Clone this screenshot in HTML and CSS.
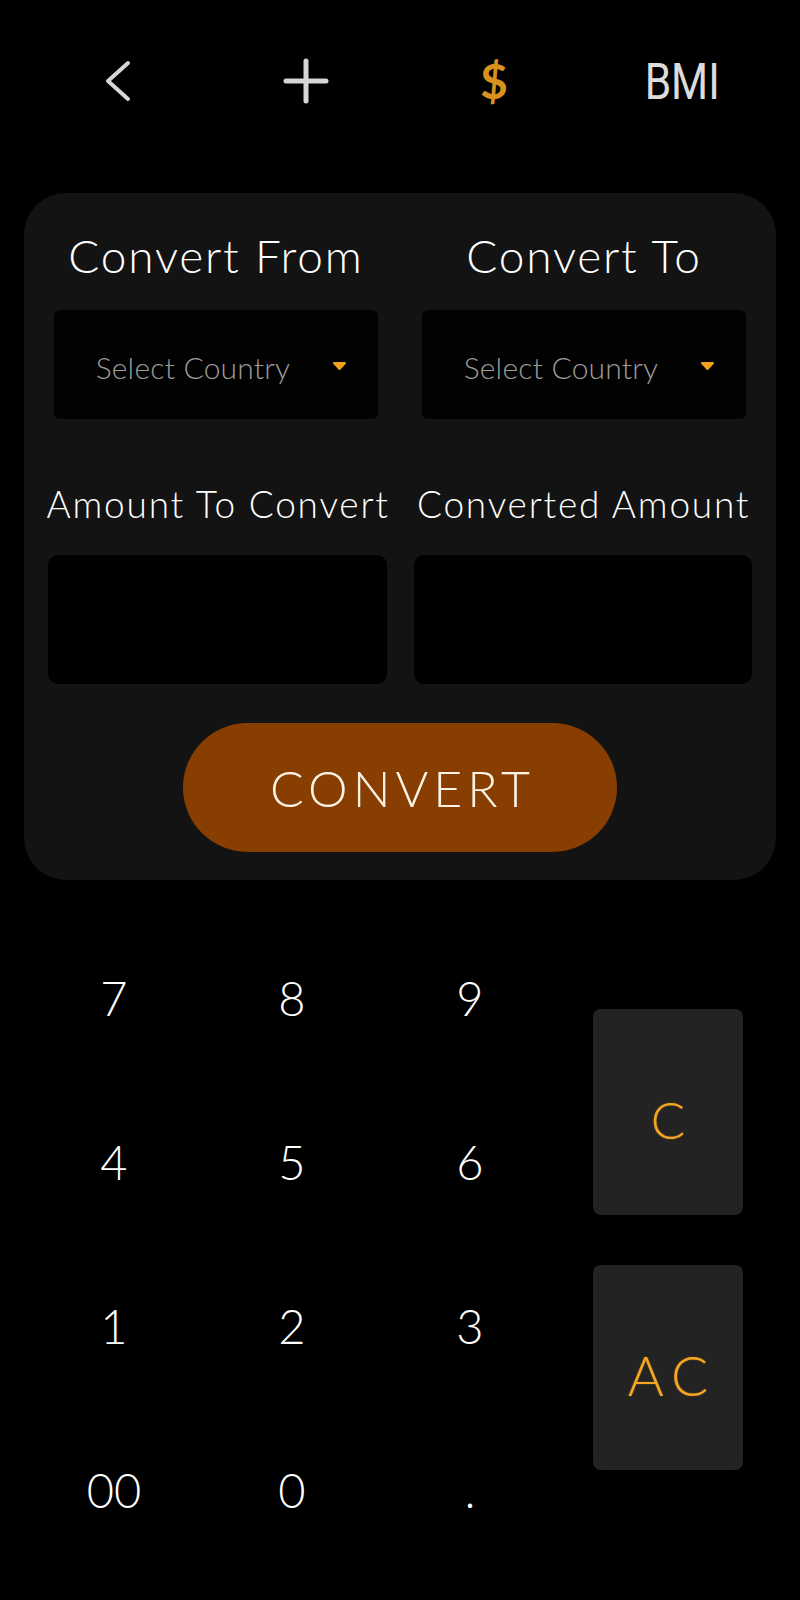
FILE: index.html
```html
<!DOCTYPE html>
<html lang="en">
<head>
<meta charset="utf-8">
<title>Currency Converter</title>
<link rel="stylesheet" href="styles.css">
</head>
<body>
<div class="app">
  <header class="topbar">
    <div class="tab">
      <svg class="ico" width="28" height="44" viewBox="0 0 28 44"><path d="M24 4 L4 22 L24 40" fill="none" stroke="#d6d6d6" stroke-width="4" stroke-linecap="round" stroke-linejoin="round"/></svg>
    </div>
    <div class="tab">
      <svg class="ico" width="46" height="46" viewBox="0 0 46 46"><path d="M23 3 V43 M3 23 H43" fill="none" stroke="#d6d6d6" stroke-width="5" stroke-linecap="round"/></svg>
    </div>
    <div class="tab dollar">$</div>
    <div class="tab bmi"><span>BMI</span></div>
  </header>

  <section class="card">
    <div class="pair pair-titles">
      <h2 class="title">Convert From</h2>
      <h2 class="title">Convert To</h2>
    </div>
    <div class="pair pair-selects">
      <div class="select">
        <span class="select-text">Select Country</span>
        <svg class="caret" width="15" height="10" viewBox="0 0 15 10"><path d="M2 2 H13 L7.5 8 Z" fill="#f5a21f" stroke="#f5a21f" stroke-width="2" stroke-linejoin="round"/></svg>
      </div>
      <div class="select">
        <span class="select-text">Select Country</span>
        <svg class="caret" width="15" height="10" viewBox="0 0 15 10"><path d="M2 2 H13 L7.5 8 Z" fill="#f5a21f" stroke="#f5a21f" stroke-width="2" stroke-linejoin="round"/></svg>
      </div>
    </div>
    <div class="pair pair-labels">
      <div class="label"><span>Amount To Convert</span></div>
      <div class="label"><span>Converted Amount</span></div>
    </div>
    <div class="pair pair-inputs">
      <div class="field"></div>
      <div class="field"></div>
    </div>
    <div class="convert">CONVERT</div>
  </section>

  <section class="keypad">
    <div class="digits">
      <span>7</span><span>8</span><span>9</span>
      <span>4</span><span>5</span><span>6</span>
      <span>1</span><span>2</span><span>3</span>
      <span>00</span><span>0</span><span>.</span>
    </div>
    <div class="ops">
      <div class="op">C</div>
      <div class="op op-ac">AC</div>
    </div>
  </section>
</div>
</body>
</html>
```

FILE: styles.css
```css
* { box-sizing: border-box; }

body {
  margin: 0;
  background: #000;
  font-family: Lato, "Open Sans", "Noto Sans", sans-serif;
  font-weight: 300;
  color: #fff;
}

.app { width: 800px; }

/* top bar */
.topbar {
  display: grid;
  grid-template-columns: repeat(4, 1fr);
  padding: 0 24px;
  height: 162px;
  align-items: center;
  justify-items: center;
}
.tab { display: flex; align-items: center; justify-content: center; }
.ico { display: block; }
.dollar {
  font-family: Lato, sans-serif;
  font-weight: 700;
  font-size: 48px;
  line-height: 1;
  color: #d8911f;
}
.bmi span {
  display: inline-block;
  font-family: Roboto, "Liberation Sans", sans-serif;
  font-weight: 400;
  font-size: 50px;
  line-height: 1;
  color: #dcdcdc;
  transform: scaleX(0.85);
  margin-top: 2px;
}

/* card */
.card {
  margin: 31px 24px 0;
  background: #131313;
  border-radius: 42px;
  padding: 35px 0 28px;
}
.pair {
  display: grid;
  grid-template-columns: minmax(0, 1fr) minmax(0, 1fr);
}
.pair-titles, .pair-selects {
  padding: 0 30px;
  column-gap: 44px;
}
.title {
  margin: 0;
  font-size: 46px;
  line-height: 56px;
  font-weight: 300;
  letter-spacing: 1.8px;
  text-align: center;
  white-space: nowrap;
}
.pair-selects { margin-top: 26px; }
.select {
  height: 109px;
  background: #020202;
  border-radius: 6px;
  display: flex;
  align-items: center;
  padding: 4px 31px 0 0;
}
.select-text {
  flex: 1;
  text-align: center;
  font-size: 30px;
  letter-spacing: 0.2px;
  color: #9b9b9b;
  white-space: nowrap;
}
.caret { display: block; margin-top: -2px; }

.pair-labels, .pair-inputs {
  padding: 0 24px;
  column-gap: 27px;
}
.pair-labels { margin-top: 63px; }
.label {
  display: flex;
  justify-content: center;
  font-size: 37px;
  line-height: 44px;
  letter-spacing: 1.8px;
  white-space: nowrap;
}
.label span { flex: none; margin-right: -1.8px; }
.pair-inputs { margin-top: 29px; }
.field {
  height: 129px;
  background: #000;
  border-radius: 10px;
}

.convert {
  display: flex;
  align-items: center;
  justify-content: center;
  margin: 39px auto 0;
  width: 434px;
  height: 129px;
  border-radius: 65px;
  background: #873e00;
  font-size: 50px;
  letter-spacing: 5px;
  padding-left: 5px;
  color: #fbf4e6;
}

/* keypad */
.keypad {
  display: flex;
  padding-left: 25px;
  margin-top: 36px;
}
.digits {
  display: grid;
  grid-template-columns: repeat(3, 178px);
  grid-auto-rows: 164px;
}
.digits span {
  display: flex;
  align-items: center;
  justify-content: center;
  font-size: 47px;
  color: #fff;
}
.ops {
  margin-left: 34px;
  padding-top: 93px;
  display: flex;
  flex-direction: column;
  gap: 50px;
}
.op {
  width: 150px;
  height: 206px;
  background: #232323;
  border-radius: 8px;
  display: flex;
  align-items: center;
  justify-content: center;
  padding-top: 14px;
  color: #f5a623;
  font-size: 51px;
  text-shadow: 0 0 2px rgba(245, 166, 35, 0.35);
}
.op-ac {
  height: 205px;
  font-size: 55px;
  letter-spacing: 8px;
  padding-left: 8px;
}
```
